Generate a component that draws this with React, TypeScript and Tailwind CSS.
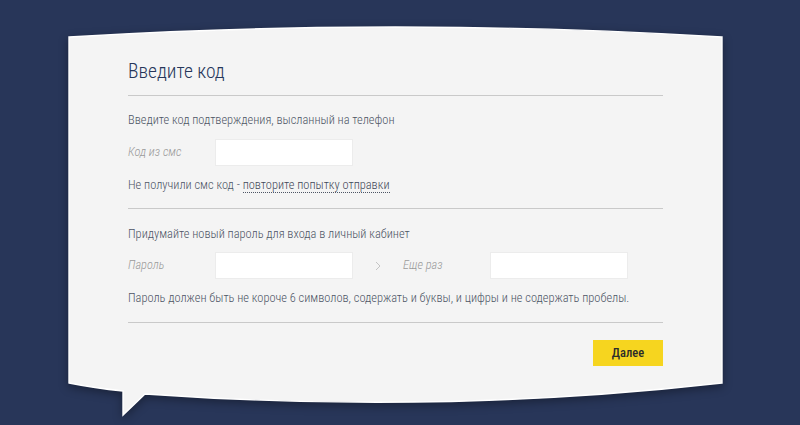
const FONT = "font-['Roboto_Condensed','Roboto',sans-serif]";

function Field({ label }: { label: string }) {
  return (
    <>
      <span className="w-[87px] shrink-0 text-[12.4px] font-light italic text-[#9a9a9a]">{label}</span>
      <input
        type="text"
        className="h-[27px] w-[138px] shrink-0 border border-[#ececec] bg-white outline-none"
      />
    </>
  );
}

function Bubble() {
  return (
    <svg
      className="absolute left-0 top-[-12px] overflow-visible [filter:drop-shadow(0_3px_5px_rgba(0,0,0,0.35))]"
      width="653"
      height="392"
      viewBox="0 -12 653 392"
    >
      <path
        d="M0,0 Q326,-20 653,0 L653,346 Q370,378 76,357 L54,378 L54,354 Q25,351 0,346 Z"
        fill="#f4f4f4"
        stroke="#ffffff"
        strokeWidth="1.4"
      />
    </svg>
  );
}

export default function App() {
  return (
    <div className={`h-[425px] w-[800px] overflow-hidden bg-[#283659] ${FONT}`}>
      <div className="relative ml-[69px] mt-[37px] h-[346px] w-[653px]">
        <Bubble />
        <div className="relative flex flex-col px-[59px] pt-[23px] font-light">
          <h1 className="text-[19.5px] leading-[24px] text-[#26365a]">Введите код</h1>
          <div className="mt-[11px] h-px bg-[#c9c9c9]" />

          <p className="mt-[15px] text-[12.4px] leading-[18px] text-[#4d5565]">
            Введите код подтверждения, высланный на телефон
          </p>
          <div className="mt-[10px] flex items-center">
            <Field label="Код из смс" />
          </div>
          <p className="mt-[10px] text-[12.4px] leading-[18px] text-[#4d5565]">
            Не получили смс код -{" "}
            <a className="border-b border-dotted border-[#4d5565] text-[#3f4757]">
              повторите попытку отправки
            </a>
          </p>
          <div className="mt-[14px] h-px bg-[#c9c9c9]" />

          <p className="mt-[16px] text-[12.4px] leading-[18px] text-[#4d5565]">
            Придумайте новый пароль для входа в личный кабинет
          </p>
          <div className="mt-[9px] flex items-center">
            <Field label="Пароль" />
            <span className="flex w-[50px] shrink-0 justify-center">
              <svg width="6" height="10" viewBox="0 0 6 10">
                <path d="M1,1 L5,5 L1,9" fill="none" stroke="#c4c4c4" strokeWidth="1" />
              </svg>
            </span>
            <Field label="Еще раз" />
          </div>
          <p className="mt-[10px] text-[12.4px] leading-[18px] text-[#4d5565]">
            Пароль должен быть не короче 6 символов, содержать и буквы, и цифры и не содержать пробелы.
          </p>
          <div className="mt-[15px] h-px bg-[#c9c9c9]" />

          <div className="mt-[17px] flex justify-end">
            <button className="h-[26px] w-[70px] bg-[#f6d51f] text-[12.5px] font-medium text-[#2b2b2b]">
              Далее
            </button>
          </div>
        </div>
      </div>
    </div>
  );
}
